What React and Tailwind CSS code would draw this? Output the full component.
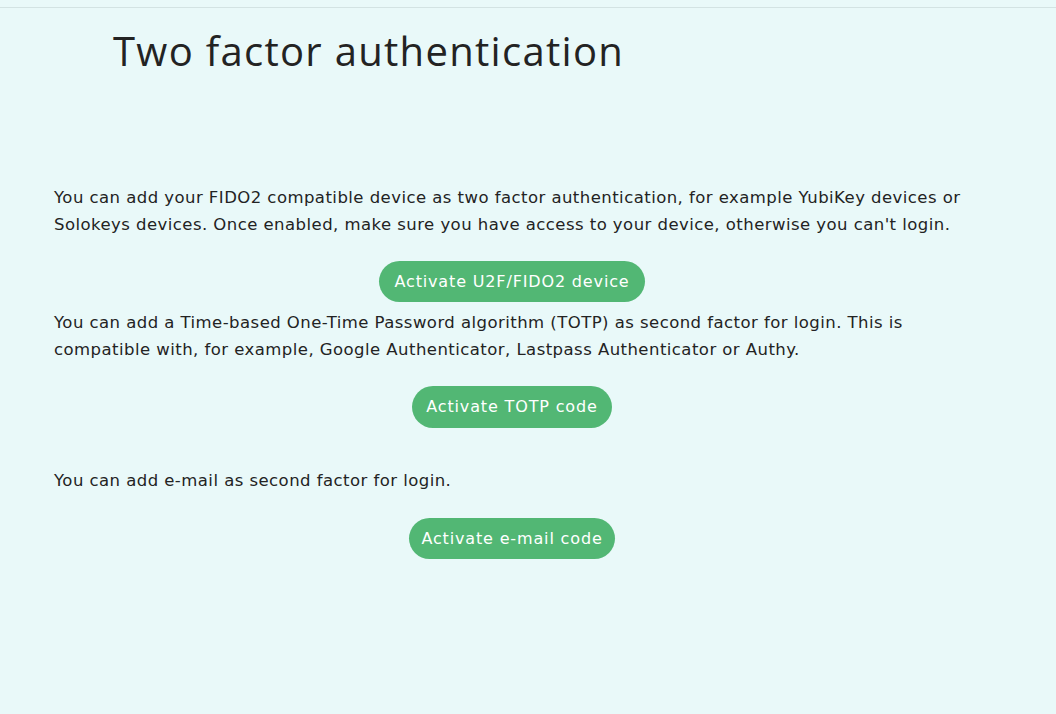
export default function App() {
  const body = { fontFamily: '"DejaVu Sans", "Open Sans", sans-serif' };
  const head = { fontFamily: '"Open Sans", "Liberation Sans", sans-serif' };
  return (
    <div className="min-h-[714px] w-full bg-[#e9f9f9] text-[#232323]" style={body}>
      <div className="h-[8px] border-b border-[#d3e3e3]" />
      <h1 className="pl-[113px] pt-[16px] text-[40px] leading-[54px] font-normal tracking-[1.3px]" style={head}>
        Two factor authentication
      </h1>
      <div className="mx-[54px] w-[916px] pt-[106px]">
        <p className="text-[16.5px] leading-[27px] tracking-[0.45px]">
          You can add your FIDO2 compatible device as two factor authentication, for example YubiKey devices or Solokeys devices. Once enabled, make sure you have access to your device, otherwise you can't login.
        </p>
        <div className="mt-[23px] flex justify-center">
          <button className="h-[41px] rounded-full bg-[#52b774] px-[15px] text-[16px] tracking-[0.85px] text-white">
            Activate U2F/FIDO2 device
          </button>
        </div>
        <p className="mt-[7px] text-[16.5px] leading-[27px] tracking-[0.45px]">
          You can add a Time-based One-Time Password algorithm (TOTP) as second factor for login. This is compatible with, for example, Google Authenticator, Lastpass Authenticator or Authy.
        </p>
        <div className="mt-[23px] flex justify-center">
          <button className="h-[42px] rounded-full bg-[#52b774] px-[14px] text-[16px] tracking-[0.85px] text-white">
            Activate TOTP code
          </button>
        </div>
        <p className="mt-[39px] text-[16.5px] leading-[27px] tracking-[0.45px]">
          You can add e-mail as second factor for login.
        </p>
        <div className="mt-[24px] flex justify-center">
          <button className="h-[41px] rounded-full bg-[#52b774] px-[12px] text-[16px] tracking-[0.85px] text-white">
            Activate e-mail code
          </button>
        </div>
      </div>
    </div>
  );
}
